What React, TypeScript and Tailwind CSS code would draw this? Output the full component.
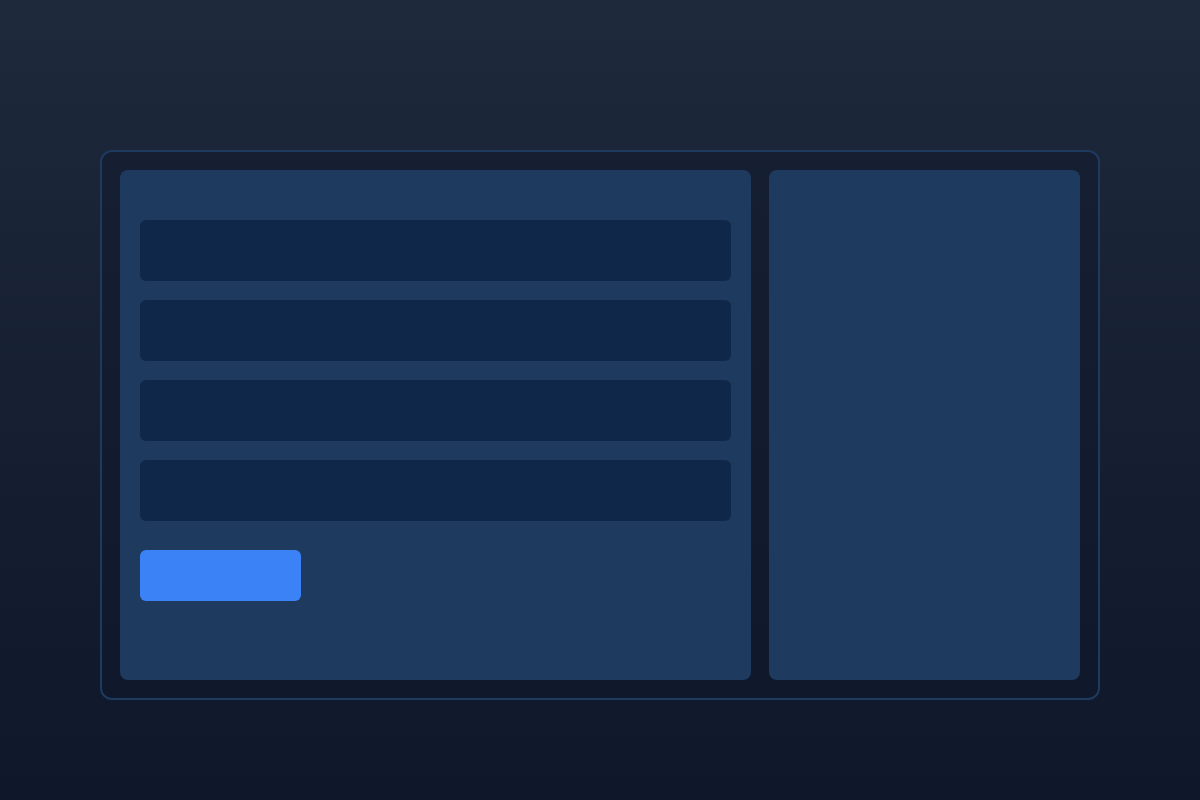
export default function App() {
  const rows = [0, 1, 2, 3];

  return (
    <div className="flex h-[800px] w-full justify-center bg-gradient-to-b from-[#1e293b] to-[#0f172a] pt-[150px]">
      <div className="flex h-[550px] w-[1000px] gap-[18px] rounded-xl border-2 border-[#1e3a5f] bg-[#0f172a]/40 p-[18px]">
        {/* Form panel */}
        <div className="flex h-full w-[631px] flex-col rounded-lg bg-[#1e3a5f] px-5 pt-[50px]">
          <div className="flex flex-col gap-[19px]">
            {rows.map((r) => (
              <div key={r} className="h-[61px] rounded-md bg-[#0f284a]" />
            ))}
          </div>
          <button className="mt-[29px] h-[51px] w-[161px] rounded-md bg-[#3b82f6]" />
        </div>

        {/* Side panel */}
        <div className="h-full flex-1 rounded-lg bg-[#1e3a5f]" />
      </div>
    </div>
  );
}
